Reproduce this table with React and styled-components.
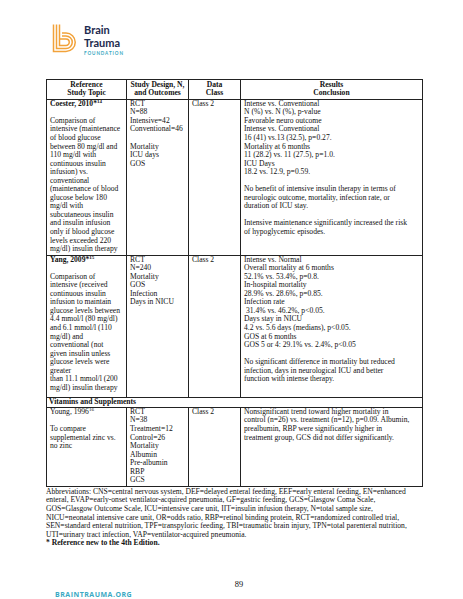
import React from "react";
import styled, { createGlobalStyle } from "styled-components";

const Global = createGlobalStyle`
  html, body { margin: 0; padding: 0; background: #fff; }
  body { font-family: "Liberation Serif", "Times New Roman", serif; color: #111; }
`;

const Page = styled.div`
  width: 463px;
  height: 599px;
  box-sizing: border-box;
  padding: 24px 41px 0 46px;
  display: flex;
  flex-direction: column;
  overflow: hidden;
`;

const Brand = styled.div`
  display: flex;
  align-items: flex-start;
  gap: 8px;
  margin-left: 6px;
  height: 56px;
`;

const BrandText = styled.div`
  display: flex;
  flex-direction: column;
  font-family: Lato, "Liberation Sans", sans-serif;
  color: #1d2b4f;
  font-weight: 700;
  font-size: 11px;
  line-height: 13.3px;
  margin-top: -1px;
`;

const Foundation = styled.span`
  color: #39a9c1;
  font-size: 4.6px;
  line-height: 6px;
  letter-spacing: 0.9px;
  font-weight: 700;
`;

const Table = styled.table`
  border-collapse: collapse;
  width: 376px;
  table-layout: fixed;
  font-size: 7.6px;
  line-height: 8.55px;
  border: 1.3px solid #222;
`;

const Col = styled.col`
  width: ${(p) => p.$w}px;
`;

const Th = styled.th`
  border: 1px solid #222;
  border-bottom-width: 1.5px;
  font-weight: 700;
  text-align: center;
  vertical-align: top;
  padding: 1px 2px 1px;
`;

const Td = styled.td`
  border: 1px solid #222;
  border-top-width: ${(p) => (p.$thick ? "1.5px" : "1px")};
  vertical-align: top;
  padding: 0 2px ${(p) => p.$pb || 1}px 3px;
  white-space: nowrap;
  overflow: hidden;
`;

const Section = styled.td`
  border: 1px solid #222;
  font-weight: 700;
  padding: 0 2px;
`;

const Line = styled.div`
  min-height: 8.55px;
  font-weight: ${(p) => (p.$bold ? 700 : 400)};
`;

const Sup = styled.sup`
  font-size: 5px;
  line-height: 0;
  vertical-align: 3px;
`;

const Notes = styled.div`
  font-size: 7.6px;
  line-height: 8.6px;
  padding-top: 1px;
  white-space: nowrap;
`;

const Bold = styled.div`
  font-weight: 700;
`;

const PageNo = styled.div`
  text-align: center;
  font-size: 8.4px;
  margin-top: 32px;
  padding-left: 10px;
`;

const Url = styled.div`
  font-family: "Open Sans", "Liberation Sans", sans-serif;
  font-weight: 700;
  color: #3aa9c3;
  font-size: 7px;
  letter-spacing: 0.5px;
  margin-left: 9px;
  margin-top: 1px;
`;

const Lines = ({ items }) =>
  items.map((t, i) => <Line key={i}>{t === "" ? "\u00a0" : t}</Line>);

const Logo = () => (
  <svg width="24" height="29" viewBox="0 0 24 29" fill="none" stroke="#f2a23a" strokeWidth="1.5">
    <path d="M1.5 0.5 V27.5 H14 A9.25 9.25 0 0 0 14 9 H10" />
    <path d="M4.5 0.5 V24.5 H14 A6.25 6.25 0 0 0 14 12 H10" />
    <path d="M7.5 0.5 V21.5 H14 A3.25 3.25 0 0 0 14 15 H7.5" />
  </svg>
);

const rows = [
  {
    head: <>Coester, 2010*<Sup>14</Sup></>,
    bold: true,
    pb: 1,
    c1: ["", "Comparison of", "intensive (maintenance", "of blood glucose", "between 80 mg/dl and", "110 mg/dl with", "continuous insulin", "infusion) vs.", "conventional", "(maintenance of blood", "glucose below 180", "mg/dl with", "subcutaneous insulin", "and insulin infusion", "only if blood glucose", "levels exceeded 220", "mg/dl) insulin therapy"],
    c2: ["RCT", "N=88", "Intensive=42", "Conventional=46", "", "Mortality", "ICU days", "GOS"],
    c4: ["Intense vs. Conventional", "N (%) vs. N (%), p-value", "Favorable neuro outcome", "Intense vs. Conventional", "16 (41) vs.13 (32.5), p=0.27.", "Mortality at 6 months", "11 (28.2) vs. 11 (27.5), p=1.0.", "ICU Days", "18.2 vs. 12.9, p=0.59.", "", "No benefit of intensive insulin therapy in terms of", "neurologic outcome, mortality, infection rate, or", "duration of ICU stay.", "", "Intensive maintenance significantly increased the risk", "of hypoglycemic episodes."],
  },
  {
    head: <>Yang, 2009*<Sup>15</Sup></>,
    bold: true,
    pb: 5,
    c1: ["", "Comparison of", "intensive (received", "continuous insulin", "infusion to maintain", "glucose levels between", "4.4 mmol/l (80 mg/dl)", "and 6.1 mmol/l (110", "mg/dl) and", "conventional (not", "given insulin unless", "glucose levels were", "greater", "than 11.1 mmol/l (200", "mg/dl) insulin therapy"],
    c2: ["RCT", "N=240", "Mortality", "GOS", "Infection", "Days in NICU"],
    c4: ["Intense vs. Normal", "Overall mortality at 6 months", "52.1% vs. 53.4%, p=0.8.", "In-hospital mortality", "28.9% vs. 28.6%, p=0.85.", "Infection rate", "\u00a031.4% vs. 46.2%, p<0.05.", "Days stay in NICU", "4.2 vs. 5.6 days (medians), p<0.05.", "GOS at 6 months", "GOS 5 or 4: 29.1% vs. 2.4%, p<0.05", "", "No significant difference in mortality but reduced", "infection, days in neurological ICU and better", "function with intense therapy."],
  },
];

const young = {
  head: <>Young, 1996<Sup>16</Sup></>,
  pb: 0,
  c1: ["", "To compare", "supplemental zinc vs.", "no zinc"],
  c2: ["RCT", "N=38", "Treatment=12", "Control=26", "Mortality", "Albumin", "Pre-albumin", "RBP", "GCS"],
  c4: ["Nonsignificant trend toward higher mortality in", "control (n=26) vs. treatment (n=12), p=0.09. Albumin,", "prealbumin, RBP were significantly higher in", "treatment group, GCS did not differ significantly."],
};

const StudyRow = ({ r, thick }) => (
  <tr>
    <Td $thick={thick} $pb={r.pb}>
      <Line $bold={r.bold}>{r.head}</Line>
      <Lines items={r.c1} />
    </Td>
    <Td $thick={thick} $pb={r.pb}><Lines items={r.c2} /></Td>
    <Td $thick={thick} $pb={r.pb}><Line>Class 2</Line></Td>
    <Td $thick={thick} $pb={r.pb}><Lines items={r.c4} /></Td>
  </tr>
);

export default function App() {
  return (
    <>
      <Global />
      <Page>
        <Brand>
          <Logo />
          <BrandText>
            <span>Brain</span>
            <span>Trauma</span>
            <Foundation>FOUNDATION</Foundation>
          </BrandText>
        </Brand>
        <Table>
          <colgroup>
            <Col $w={80} />
            <Col $w={62} />
            <Col $w={52} />
            <Col $w={182} />
          </colgroup>
          <thead>
            <tr>
              <Th>Reference<br />Study Topic</Th>
              <Th>Study Design, N,<br />and Outcomes</Th>
              <Th>Data<br />Class</Th>
              <Th>Results<br />Conclusion</Th>
            </tr>
          </thead>
          <tbody>
            {rows.map((r, i) => (
              <StudyRow key={i} r={r} thick={i > 0} />
            ))}
            <tr>
              <Section colSpan={4}>Vitamins and Supplements</Section>
            </tr>
            <StudyRow r={young} />
          </tbody>
        </Table>
        <Notes>
          <div>Abbreviations: CNS=central nervous system, DEF=delayed enteral feeding, EEF=early enteral feeding, EN=enhanced</div>
          <div>enteral, EVAP=early-onset ventilator-acquired pneumonia, GF=gastric feeding, GCS=Glasgow Coma Scale,</div>
          <div>GOS=Glasgow Outcome Scale, ICU=intensive care unit, IIT=insulin infusion therapy, N=total sample size,</div>
          <div>NICU=neonatal intensive care unit, OR=odds ratio, RBP=retinol binding protein, RCT=randomized controlled trial,</div>
          <div>SEN=standard enteral nutrition, TPF=transpyloric feeding, TBI=traumatic brain injury, TPN=total parenteral nutrition,</div>
          <div>UTI=urinary tract infection, VAP=ventilator-acquired pneumonia.</div>
          <Bold>* Reference new to the 4th Edition.</Bold>
        </Notes>
        <PageNo>89</PageNo>
        <Url>BRAINTRAUMA.ORG</Url>
      </Page>
    </>
  );
}
